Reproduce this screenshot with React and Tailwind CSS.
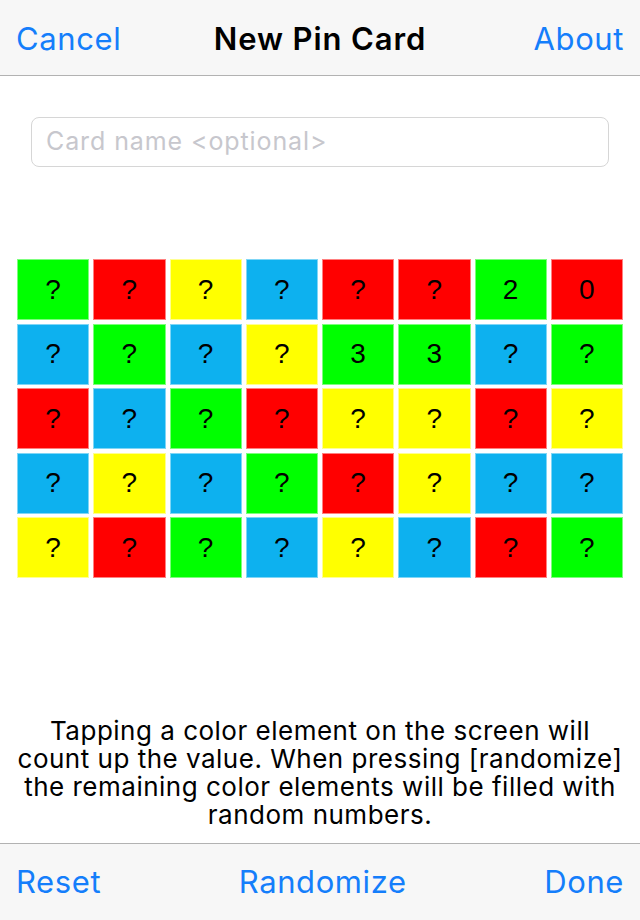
import React from "react";

const G = "bg-[#00ff00] border-[#7cff7c]";
const R = "bg-[#ff0000] border-[#ff8080]";
const Y = "bg-[#ffff00] border-[#ffff90]";
const B = "bg-[#0db1ef] border-[#7fd6f6]";

const grid = [
  [[G, "?"], [R, "?"], [Y, "?"], [B, "?"], [R, "?"], [R, "?"], [G, "2"], [R, "0"]],
  [[B, "?"], [G, "?"], [B, "?"], [Y, "?"], [G, "3"], [G, "3"], [B, "?"], [G, "?"]],
  [[R, "?"], [B, "?"], [G, "?"], [R, "?"], [Y, "?"], [Y, "?"], [R, "?"], [Y, "?"]],
  [[B, "?"], [Y, "?"], [B, "?"], [G, "?"], [R, "?"], [Y, "?"], [B, "?"], [B, "?"]],
  [[Y, "?"], [R, "?"], [G, "?"], [B, "?"], [Y, "?"], [B, "?"], [R, "?"], [G, "?"]],
];

const lines = [
  "Tapping a color element on the screen will",
  "count up the value. When pressing [randomize]",
  "the remaining color elements will be filled with",
  "random numbers.",
];

export default function App() {
  return (
    <div className="w-[640px] h-[920px] bg-white flex flex-col font-['Inter',_'Liberation_Sans',_sans-serif] overflow-hidden">
      <div className="h-[76px] bg-[#f7f7f7] border-b border-[#b2b2b2] flex items-center px-4 pt-[3px] shrink-0">
        <span className="flex-1 text-[31px] text-[#147efb] tracking-[0.6px]">Cancel</span>
        <span className="text-[31px] font-semibold text-black tracking-[0.9px]">New Pin Card</span>
        <span className="flex-1 text-right text-[31px] text-[#147efb] tracking-[0.6px]">About</span>
      </div>
      <div className="flex-1 flex flex-col">
        <div className="pt-[41px] px-[31px]">
          <div className="h-[50px] border border-[#d6d6d6] rounded-[8px] flex items-center px-[14px]">
            <span className="text-[25px] text-[#c7c7cd] tracking-[0.9px]">Card name &lt;optional&gt;</span>
          </div>
        </div>
        <div className="pt-[92px] px-[17px]">
          <div className="grid grid-cols-8 gap-x-[4px] gap-y-[3.5px]">
            {grid.flat().map(([c, v], i) => (
              <div key={i} className={`${c} border h-[61px] flex items-center justify-center text-[28px] text-black font-['Liberation_Sans',_sans-serif]`}>
                {v}
              </div>
            ))}
          </div>
        </div>
        <div className="mt-auto pb-[14px] text-center text-[26px] leading-[28px] text-black tracking-[0.5px]">
          {lines.map((l, i) => (
            <div key={i} className="whitespace-nowrap">{l}</div>
          ))}
        </div>
      </div>
      <div className="h-[77px] bg-[#f7f7f7] border-t border-[#b2b2b2] flex items-center justify-between px-4 shrink-0">
        <span className="text-[31px] text-[#147efb] tracking-[0.6px]">Reset</span>
        <span className="text-[31px] text-[#147efb] tracking-[0.6px]">Randomize</span>
        <span className="text-[31px] text-[#147efb] tracking-[0.6px]">Done</span>
      </div>
    </div>
  );
}
